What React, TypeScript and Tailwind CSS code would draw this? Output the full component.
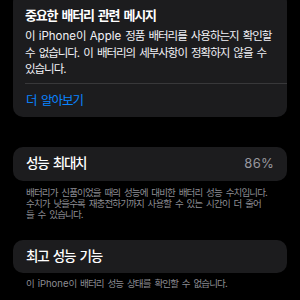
import React from 'react';

// Latin words keep their natural spacing; Hangul is tightened to match the iOS face
const L: React.FC<{ children: React.ReactNode }> = ({ children }) => (
  <span className="tracking-normal">{children}</span>
);

const App: React.FC = () => {
  return (
    <div className="min-h-[300px] bg-black font-['Inter','Noto_Sans_CJK_KR',sans-serif] text-white antialiased overflow-hidden [word-spacing:0.12em]">
      <div className="-mt-[8px] px-[13px]">
        {/* Important battery message */}
        <div className="rounded-[10px] bg-[#1c1c1e] pl-[12px]">
          <div className="pt-[14px] pr-3 text-[13px] leading-[18px] font-semibold tracking-[-0.09em] whitespace-nowrap">
            중요한 배터리 관련 메시지
          </div>
          <p className="mt-[4px] pr-3 text-[11.5px] leading-[16.5px] tracking-[-0.09em] whitespace-nowrap text-[#f2f2f7]">
            이 <L>iPhone</L>이 <L>Apple</L> 정품 배터리를 사용하는지 확인할
            <br />
            수 없습니다. 이 배터리의 세부사항이 정확하지 않을 수
            <br />
            있습니다.
          </p>
          <div className="mt-[5px] h-px bg-[#38383a]" />
          <div className="pt-[8px] pb-[7px] text-[12.5px] leading-[18px] tracking-[-0.08em] text-[#0a84ff] pl-px">
            더 알아보기
          </div>
        </div>

        {/* Maximum capacity */}
        <div className="mt-[30px] flex h-[34px] items-center justify-between rounded-[10px] bg-[#1c1c1e] px-[13px]">
          <span className="text-[13.5px] font-medium tracking-[-0.09em]">성능 최대치</span>
          <span className="text-[13px] tracking-[0.02em] text-[#98989f]">86%</span>
        </div>
        <p className="mt-[6px] px-[13px] text-[9.5px] leading-[11px] tracking-[-0.09em] whitespace-nowrap text-[#8d8d93]">
          배터리가 신품이었을 때의 성능에 대비한 배터리 성능 수치입니다.
          <br />
          수치가 낮을수록 재충전하기까지 사용할 수 있는 시간이 더 줄어
          <br />
          들 수 있습니다.
        </p>

        {/* Peak performance capability */}
        <div className="mt-[20px] flex h-[33px] items-center rounded-[10px] bg-[#1c1c1e] px-[13px]">
          <span className="text-[13.5px] font-medium tracking-[-0.09em]">최고 성능 기능</span>
        </div>
        <p className="mt-[5px] px-[13px] text-[9.5px] leading-[11px] tracking-[-0.09em] whitespace-nowrap text-[#8d8d93]">
          이 <L>iPhone</L>이 배터리 성능 상태를 확인할 수 없습니다.
        </p>
      </div>
    </div>
  );
};

export default App;
